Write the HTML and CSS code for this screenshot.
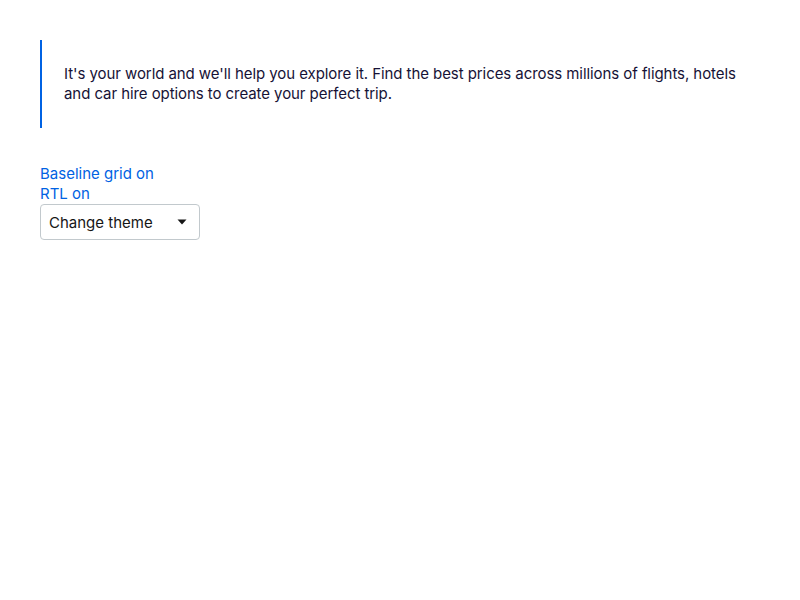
FILE: index.html
```html
<!DOCTYPE html>
<html lang="en">
<head>
<meta charset="utf-8">
<title>Blockquote</title>
<link rel="stylesheet" href="styles.css">
</head>
<body>
<main class="page">
  <blockquote class="quote">
    <p>It's your world and we'll help you explore it. Find the best prices across millions of flights, hotels and car hire options to create your perfect trip.</p>
  </blockquote>
  <div class="controls">
    <a class="toggle" href="#">Baseline grid on</a>
    <a class="toggle" href="#">RTL on</a>
    <div class="select">
      <span>Change theme</span>
      <svg class="caret" width="10" height="6" viewBox="0 0 10 6"><path d="M0.5 0.5h9L5 5.5z" fill="#161616"/></svg>
    </div>
  </div>
</main>
</body>
</html>
```
FILE: styles.css
```css
html, body { margin: 0; padding: 0; background: #fff; }
body { font-family: Inter, "Noto Sans", sans-serif; }
.page { padding: 40px; }
.quote {
  margin: 0;
  border-left: 2px solid #0062e3;
  padding: 24px 0 24px 22px;
  color: #161236;
  font-size: 15px;
  line-height: 20px;
  letter-spacing: -0.07px;
}
.quote p { margin: 0; }
.controls { margin-top: 36px; display: flex; flex-direction: column; align-items: flex-start; }
.toggle {
  color: #0062e3;
  text-decoration: none;
  font-size: 15px;
  line-height: 20px;
}
.select {
  box-sizing: border-box;
  width: 160px;
  height: 36px;
  border: 1px solid #c2c9cd;
  border-radius: 4px;
  display: flex;
  align-items: center;
  justify-content: space-between;
  padding: 0 12px 0 8px;
  font-size: 15px;
  color: #161616;
}
.caret { display: block; }
```
